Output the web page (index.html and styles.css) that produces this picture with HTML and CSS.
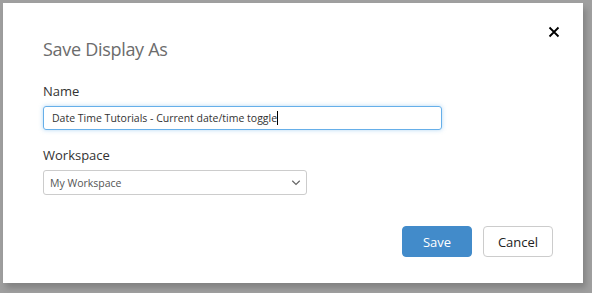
FILE: index.html
```html
<!DOCTYPE html>
<html lang="en">
<head>
  <meta charset="UTF-8">
  <title>Save Display As</title>
  <link rel="stylesheet" href="styles.css">
</head>
<body>
  <div class="modal">
    <button class="close" aria-label="Close">
      <svg viewBox="0 0 12 12" width="12" height="12">
        <path d="M1.5 1.5L10.5 10.5M10.5 1.5L1.5 10.5" stroke="#000" stroke-width="1.8" fill="none"/>
      </svg>
    </button>

    <h2 class="modal-title">Save Display As</h2>

    <div class="field">
      <label>Name</label>
      <div class="input focused">Date Time Tutorials - Current date/time toggle<span class="caret"></span></div>
    </div>

    <div class="field">
      <label>Workspace</label>
      <div class="select">
        <span>My Workspace</span>
        <svg viewBox="0 0 12 8" width="10" height="6">
          <path d="M1 1L6 6L11 1" stroke="#666" stroke-width="1.6" fill="none"/>
        </svg>
      </div>
    </div>

    <div class="footer">
      <button class="btn btn-primary">Save</button>
      <button class="btn btn-default">Cancel</button>
    </div>
  </div>
</body>
</html>
```

FILE: styles.css
```css
* {
  margin: 0;
  padding: 0;
  box-sizing: border-box;
}

body {
  font-family: 'Open Sans', 'Noto Sans', sans-serif;
  background: #9f9f9f;
  width: 592px;
  height: 293px;
  overflow: hidden;
  padding: 3px 0 0 3px;
}

.modal {
  position: relative;
  width: 580px;
  height: 280px;
  background: #fff;
  box-shadow: 3px 5px 6px rgba(0, 0, 0, 0.18);
  padding: 33px 30px 0 40px;
}

.close {
  position: absolute;
  top: 23px;
  right: 23px;
  border: none;
  background: none;
  width: 12px;
  height: 12px;
  display: flex;
}

.modal-title {
  font-size: 18px;
  letter-spacing: -0.3px;
  font-weight: 400;
  color: #6c6c6c;
  line-height: 26px;
  margin-bottom: 20px;
}

.field {
  margin-bottom: 16px;
}

.field label {
  display: block;
  font-size: 13px;
  color: #333;
  line-height: 18px;
  margin-bottom: 6px;
}

.input {
  width: 399px;
  height: 24px;
  border: 1px solid #66afe9;
  border-radius: 3px;
  box-shadow: 0 0 4px rgba(102, 175, 233, 0.5);
  font-size: 10.5px;
  color: #333;
  line-height: 22px;
  padding: 0 8px;
  white-space: nowrap;
}

.caret {
  display: inline-block;
  width: 1px;
  height: 14px;
  background: #000;
  vertical-align: -3px;
}

.select {
  width: 264px;
  height: 25px;
  border: 1px solid #ccc;
  border-radius: 3px;
  font-size: 10.5px;
  color: #555;
  padding: 0 5px 0 6px;
  display: flex;
  align-items: center;
  justify-content: space-between;
}

.footer {
  display: flex;
  justify-content: flex-end;
  gap: 11px;
  margin-top: 31px;
}

.btn {
  width: 70px;
  height: 31px;
  border-radius: 4px;
  font-family: inherit;
  font-size: 13px;
}

.btn-primary {
  background: #428bca;
  color: #fff;
  border: 1px solid #428bca;
}

.btn-default {
  background: #fff;
  color: #222;
  border: 1px solid #ccc;
}
```
